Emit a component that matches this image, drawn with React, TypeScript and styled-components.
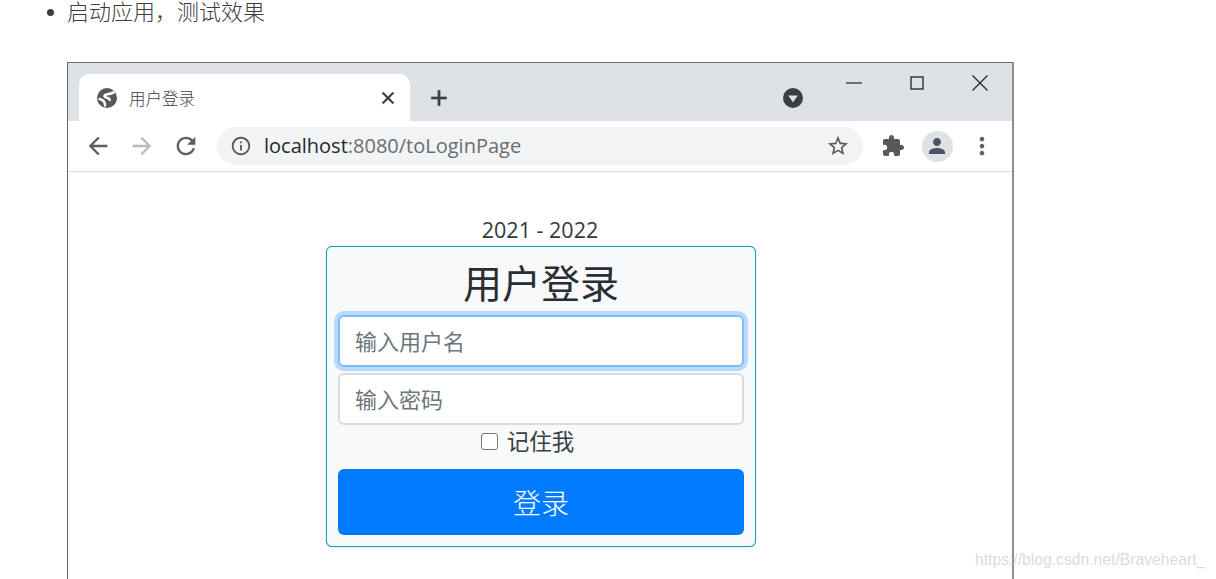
import React from 'react';
import styled, { createGlobalStyle } from 'styled-components';

const GlobalStyle = createGlobalStyle`
  html, body {
    margin: 0;
    padding: 0;
    height: 579px;
    overflow: hidden;
    background: #fff;
  }
  body {
    font-family: "Open Sans", "Noto Sans CJK SC", sans-serif;
    color: #212529;
  }
`;

const Page = styled.div`
  position: relative;
  width: 1216px;
  height: 579px;
  overflow: hidden;
`;
const Steps = styled.div`
  height: 62px;
  padding-left: 47px;
  box-sizing: border-box;
  display: flex;
  align-items: flex-start;
  color: #3d3d3d;
  font-size: 22px;
  line-height: 21px;
  font-family: "Noto Sans CJK SC", sans-serif;
  font-weight: 300;
`;
const Bullet = styled.span`
  width: 7px;
  height: 7px;
  margin: 9px 13px 0 0;
  flex: none;
  background: #3d3d3d;
  border-radius: 50%;
`;
const Browser = styled.div`
  box-sizing: border-box;
  width: 947px;
  height: 517px;
  margin-left: 67px;
  border-top: 1px solid #6a6a6a;
  border-left: 1px solid #666;
  border-right: 2px solid #8e8e8e;
  display: flex;
  flex-direction: column;
`;
const TabStrip = styled.div`
  height: 58px;
  flex: none;
  display: flex;
  align-items: flex-end;
  padding-left: 11px;
  background: #dee1e6;
`;
const Tab = styled.div`
  box-sizing: border-box;
  width: 331px;
  height: 47px;
  padding: 0 12px 0 16px;
  display: flex;
  align-items: center;
  background: #fff;
  border-radius: 10px 10px 0 0;
`;
const TabTitle = styled.span`
  flex: 1;
  margin-left: 10px;
  font-family: "Noto Sans CJK SC", sans-serif;
  font-size: 16.5px;
  font-weight: 300;
  color: #3c4043;
`;
const NewTab = styled.div`
  width: 58px;
  height: 47px;
  display: flex;
  align-items: center;
  justify-content: center;
`;
const StripSpacer = styled.div`
  flex: 1;
`;
const ProfileDrop = styled.div`
  width: 24px;
  height: 47px;
  margin-right: 17px;
  display: flex;
  align-items: center;
`;
const WindowControls = styled.div`
  align-self: flex-start;
  margin-right: 1px;
  display: flex;
`;
const WindowControl = styled.div`
  width: 63px;
  height: 40px;
  display: flex;
  align-items: center;
  justify-content: center;
`;
const Toolbar = styled.div`
  box-sizing: border-box;
  height: 51px;
  flex: none;
  padding-left: 8px;
  display: flex;
  align-items: center;
  background: #fff;
  border-bottom: 1px solid #dadce0;
`;
const ToolButton = styled.div`
  width: 44px;
  height: 44px;
  display: flex;
  align-items: center;
  justify-content: center;
`;
const MenuButton = styled(ToolButton)`
  margin-left: 1px;
`;
const Omnibox = styled.div`
  box-sizing: border-box;
  width: 646px;
  height: 38px;
  margin: 0 8px 0 9px;
  padding: 0 13px;
  display: flex;
  align-items: center;
  background: #f1f3f4;
  border-radius: 19px;
`;
const Url = styled.span`
  flex: 1;
  margin-left: 12px;
  padding-bottom: 2px;
  font-size: 20px;
  color: #6a6d71;
`;
const Host = styled.span`
  color: #26282b;
`;
const Avatar = styled.div`
  width: 31px;
  height: 31px;
  display: flex;
  align-items: center;
  justify-content: center;
  background: #dee1e6;
  border-radius: 50%;
`;
const Viewport = styled.div`
  flex: 1;
  padding: 42px 0 0 2px;
  display: flex;
  flex-direction: column;
  align-items: center;
  background: #fff;
`;
const Years = styled.div`
  height: 32px;
  margin-right: 2px;
  font-size: 21.5px;
  line-height: 32px;
  color: #33383d;
`;
const LoginCard = styled.form`
  box-sizing: border-box;
  width: 430px;
  height: 301px;
  padding: 0 11px;
  background: #f8f9fa;
  border: 1px solid #17a2b8;
  border-radius: 6px;
  box-shadow: 0 0 1px #17a2b8;
`;
const Title = styled.h1`
  margin: 0;
  height: 68px;
  font-family: "Noto Sans CJK SC", sans-serif;
  font-size: 39px;
  font-weight: 400;
  line-height: 68px;
  text-align: center;
  color: #2a2e33;
`;
const Field = styled.input<{ $focused?: boolean }>`
  box-sizing: border-box;
  display: block;
  width: 100%;
  height: 52px;
  margin-bottom: 6px;
  padding: 0 15px 2px;
  font-family: "Noto Sans CJK SC", sans-serif;
  font-size: 22px;
  color: #495057;
  background: #fff;
  border: 2px solid ${(p) => (p.$focused ? '#80bdff' : '#d8dbdf')};
  border-radius: 6px;
  outline: none;
  box-shadow: ${(p) => (p.$focused ? '0 0 0 4px rgba(0, 123, 255, 0.25)' : 'none')};
  &::placeholder {
    color: #6c757d;
    opacity: 1;
  }
`;
const RememberRow = styled.label`
  height: 44px;
  margin-top: -6px;
  padding: 0 27px 15px 0;
  box-sizing: border-box;
  display: flex;
  align-items: center;
  justify-content: center;
  font-family: "Noto Sans CJK SC", sans-serif;
  font-size: 22.5px;
  color: #3a3f44;
`;
const RememberBox = styled.input`
  width: 17px;
  height: 17px;
  margin: 3px 9px 0 0;
  appearance: none;
  background: #fff;
  border: 1.5px solid #767676;
  border-radius: 3px;
`;
const SubmitButton = styled.button`
  display: block;
  width: 100%;
  height: 66px;
  padding: 0;
  font-family: "Noto Sans CJK SC", sans-serif;
  font-size: 28px;
  font-weight: 300;
  color: #fff;
  background: #007bff;
  border: none;
  border-radius: 6px;
`;
const Watermark = styled.div`
  position: absolute;
  left: 975px;
  top: 549px;
  font-family: "Liberation Sans", sans-serif;
  font-size: 15.7px;
  line-height: 22px;
  color: #dcdcdc;
  white-space: nowrap;
`;

const Icon = ({
  d,
  size = 24,
  color = '#5f6368',
  bold = 0,
}: {
  d: string;
  size?: number;
  color?: string;
  bold?: number;
}) => (
  <svg width={size} height={size} viewBox="0 0 24 24" fill={color} style={{ flex: 'none' }}>
    <path d={d} stroke={color} strokeWidth={bold} />
  </svg>
);

const Favicon = () => (
  <svg width="24" height="24" viewBox="0 0 24 24" fill="none" style={{ flex: 'none' }}>
    <circle cx="12" cy="12" r="10" fill="#55585c" />
    <path
      d="M18.5 6.5C15 8.5 9.5 7.5 9.5 10c0 2.2 5 1.5 5.2 3.8"
      stroke="#fff"
      strokeWidth="2.6"
      strokeLinecap="round"
    />
    <path d="M4.5 13c2.5.5 5.5 1.5 5.5 6.5" stroke="#fff" strokeWidth="2.4" strokeLinecap="round" />
  </svg>
);

const BACK = 'M20 11H7.83l5.59-5.59L12 4l-8 8 8 8 1.41-1.41L7.83 13H20v-2z';
const FORWARD = 'M4 11h12.17l-5.59-5.59L12 4l8 8-8 8-1.41-1.41L16.17 13H4v-2z';
const RELOAD =
  'M17.65 6.35C16.2 4.9 14.21 4 12 4c-4.42 0-7.99 3.58-7.99 8s3.57 8 7.99 8c3.73 0 6.84-2.55 7.73-6h-2.08c-.82 2.33-3.04 4-5.65 4-3.31 0-6-2.69-6-6s2.69-6 6-6c1.66 0 3.14.69 4.22 1.78L13 11h7V4l-2.35 2.35z';
const INFO =
  'M11 7h2v2h-2zm0 4h2v6h-2zm1-9C6.48 2 2 6.48 2 12s4.48 10 10 10 10-4.48 10-10S17.52 2 12 2zm0 18c-4.41 0-8-3.59-8-8s3.59-8 8-8 8 3.59 8 8-3.59 8-8 8z';
const STAR =
  'M22 9.24l-7.19-.62L12 2 9.19 8.63 2 9.24l5.46 4.73L5.82 21 12 17.27 18.18 21l-1.63-7.03L22 9.24zM12 15.4l-3.76 2.27 1-4.28-3.32-2.88 4.38-.38L12 6.1l1.71 4.04 4.38.38-3.32 2.88 1 4.28L12 15.4z';
const PUZZLE =
  'M20.5 11H19V7c0-1.1-.9-2-2-2h-4V3.5C13 2.12 11.88 1 10.5 1S8 2.12 8 3.5V5H4c-1.1 0-1.99.9-1.99 2v3.8H3.5c1.49 0 2.7 1.21 2.7 2.7s-1.21 2.7-2.7 2.7H2V20c0 1.1.9 2 2 2h3.8v-1.5c0-1.49 1.21-2.7 2.7-2.7 1.49 0 2.7 1.21 2.7 2.7V22H17c1.1 0 2-.9 2-2v-4h1.5c1.38 0 2.5-1.12 2.5-2.5S21.88 11 20.5 11z';
const PERSON =
  'M12 12c2.21 0 4-1.79 4-4s-1.79-4-4-4-4 1.79-4 4 1.79 4 4 4zm0 2c-2.67 0-8 1.34-8 4v2h16v-2c0-2.66-5.33-4-8-4z';
const MORE =
  'M12 8c1.1 0 2-.9 2-2s-.9-2-2-2-2 .9-2 2 .9 2 2 2zm0 2c-1.1 0-2 .9-2 2s.9 2 2 2 2-.9 2-2-.9-2-2-2zm0 6c-1.1 0-2 .9-2 2s.9 2 2 2 2-.9 2-2-.9-2-2-2z';
const CLOSE_TAB =
  'M19 6.41 17.59 5 12 10.59 6.41 5 5 6.41 10.59 12 5 17.59 6.41 19 12 13.41 17.59 19 19 17.59 13.41 12z';
const PLUS = 'M19 13h-6v6h-2v-6H5v-2h6V5h2v6h6v2z';
const DROP = 'M12 2a10 10 0 1 0 0 20 10 10 0 0 0 0-20zm0 14.2L7.2 9.6h9.6z';

const App = () => {
  return (
    <Page>
      <GlobalStyle />
      <Steps>
        <Bullet />
        <span>启动应用，测试效果</span>
      </Steps>
      <Browser>
        <TabStrip>
          <Tab>
            <Favicon />
            <TabTitle>用户登录</TabTitle>
            <Icon d={CLOSE_TAB} size={20} color="#3c4043" bold={1} />
          </Tab>
          <NewTab>
            <Icon d={PLUS} size={26} color="#3c4043" bold={0.5} />
          </NewTab>
          <StripSpacer />
          <ProfileDrop>
            <Icon d={DROP} size={24} color="#3c4043" />
          </ProfileDrop>
          <WindowControls>
            <WindowControl>
              <svg width="16" height="16" viewBox="0 0 16 16">
                <path d="M0 8h16" stroke="#222" strokeWidth="1.2" />
              </svg>
            </WindowControl>
            <WindowControl>
              <svg width="16" height="16" viewBox="0 0 16 16" fill="none">
                <rect x="2" y="2" width="12" height="12" stroke="#222" strokeWidth="1.3" />
              </svg>
            </WindowControl>
            <WindowControl>
              <svg width="18" height="18" viewBox="0 0 18 18">
                <path d="M1.5 1.5l15 15M16.5 1.5l-15 15" stroke="#222" strokeWidth="1.2" />
              </svg>
            </WindowControl>
          </WindowControls>
        </TabStrip>
        <Toolbar>
          <ToolButton>
            <Icon d={BACK} size={28} color="#5a5d61" />
          </ToolButton>
          <ToolButton>
            <Icon d={FORWARD} size={28} color="#b9bbbe" />
          </ToolButton>
          <ToolButton>
            <Icon d={RELOAD} size={28} color="#5a5d61" />
          </ToolButton>
          <Omnibox>
            <Icon d={INFO} size={22} color="#55585c" />
            <Url>
              <Host>localhost</Host>:8080/toLoginPage
            </Url>
            <Icon d={STAR} size={24} color="#55585c" />
          </Omnibox>
          <ToolButton>
            <Icon d={PUZZLE} size={24} color="#55585c" />
          </ToolButton>
          <ToolButton>
            <Avatar>
              <Icon d={PERSON} size={24} color="#4a5368" />
            </Avatar>
          </ToolButton>
          <MenuButton>
            <Icon d={MORE} size={28} color="#5f6368" />
          </MenuButton>
        </Toolbar>
        <Viewport>
          <Years>2021 - 2022</Years>
          <LoginCard>
            <Title>用户登录</Title>
            <Field $focused placeholder="输入用户名" />
            <Field type="password" placeholder="输入密码" />
            <RememberRow>
              <RememberBox type="checkbox" />
              记住我
            </RememberRow>
            <SubmitButton type="button">登录</SubmitButton>
          </LoginCard>
        </Viewport>
      </Browser>
      <Watermark>https://blog.csdn.net/Braveheart_</Watermark>
    </Page>
  );
};

export default App;
